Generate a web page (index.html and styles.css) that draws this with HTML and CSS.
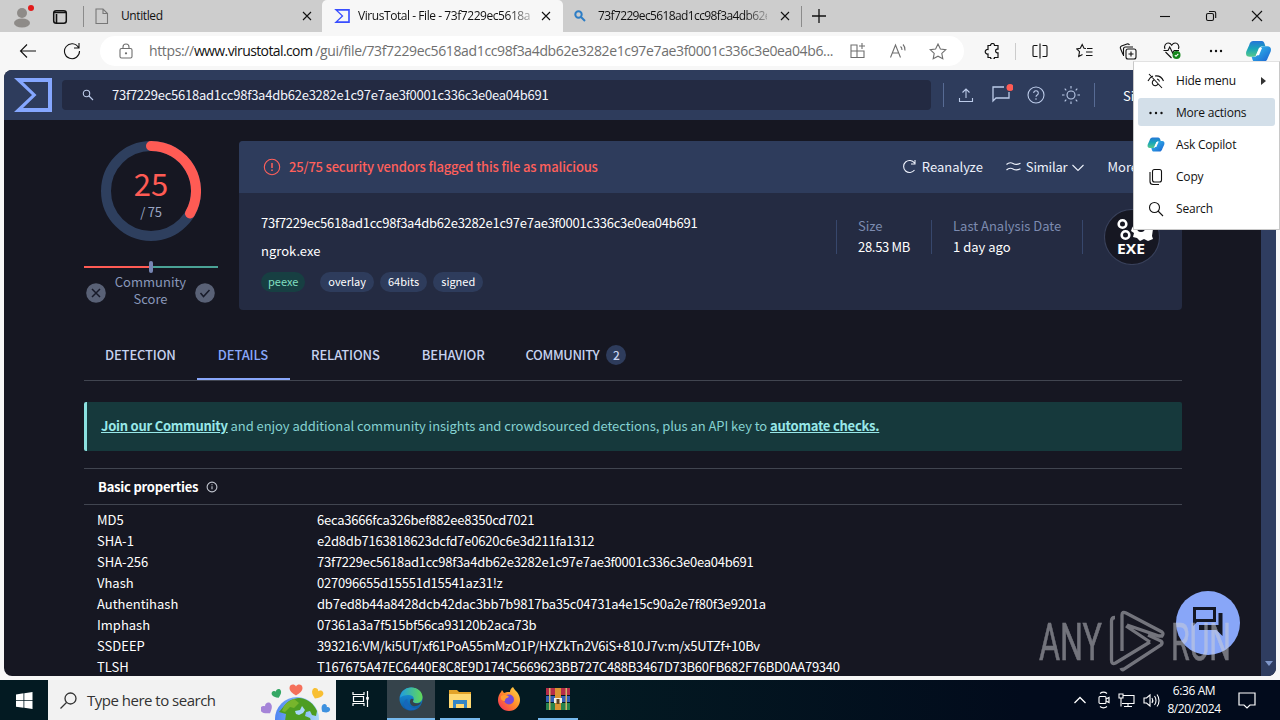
FILE: index.html
```html
<!DOCTYPE html>
<html lang="en">
<head>
<meta charset="utf-8">
<title>VirusTotal - File</title>
<link rel="stylesheet" href="styles.css">
</head>
<body>
<svg class="defs" aria-hidden="true">
  <defs>
    <linearGradient id="cpA" x1="0" y1="0" x2="0" y2="1"><stop offset="0" stop-color="#2476d8"/><stop offset=".5" stop-color="#18a5b8"/><stop offset="1" stop-color="#57c98a"/></linearGradient>
    <linearGradient id="cpB" x1="0" y1="0" x2="1" y2="1"><stop offset="0" stop-color="#32c5ee"/><stop offset="1" stop-color="#1b5fd0"/></linearGradient>
    <linearGradient id="edgeA" x1="0" y1="0" x2="1" y2="0"><stop offset="0" stop-color="#1f9de0"/><stop offset="1" stop-color="#62d957"/></linearGradient>
    <linearGradient id="edgeB" x1="0" y1="0" x2="0" y2="1"><stop offset="0" stop-color="#1b9de2"/><stop offset="1" stop-color="#0c59a4"/></linearGradient>
    <linearGradient id="fox" x1="1" y1="0" x2="0" y2="1"><stop offset="0" stop-color="#ffe14a"/><stop offset=".5" stop-color="#ff8a2a"/><stop offset="1" stop-color="#f5245f"/></linearGradient>
    <linearGradient id="earth" x1="0" y1="0" x2="1" y2="0"><stop offset="0" stop-color="#4f86f3"/><stop offset="1" stop-color="#a9d8fb"/></linearGradient>
    <symbol id="copilot" viewBox="0 0 24 24">
      <g stroke="none">
      <path d="M7 2h8c2 0 2.500 1.500 3 3l.6 2h-2.600c-2 0-3 1-3.600 3l-1.800 4c-.7 2-1.500 3-3.500 3H3.500c-3 0-4-2-3.200-5L3 6c.8-2.600 2-4 4-4z" fill="url(#cpA)"/>
      <path d="M17 22H9c-2 0-2.500-1.500-3-3l-.6-2H8c2 0 3-1 3.600-3L13.400 10c.7-2 1.500-3 3.500-3h3.600c3 0 4 2 3.200 5L21 18c-.8 2.600-2 4-4 4z" fill="url(#cpB)"/>
      <path d="M12.500 8.500h3l-3 7h-3z" fill="#fff"/>
      </g>
    </symbol>
    <symbol id="close" viewBox="0 0 12 12"><path d="M2 2l8 8M10 2l-8 8"/></symbol>
    <symbol id="sigma" viewBox="0 0 38 34"><path d="M0 0h38v34H0l18-17zM9 4l13.500 13L9 30h25V4z" fill="currentColor" fill-rule="evenodd" stroke="none"/></symbol>
    <path id="heart" d="M0 5.500C-4 3-6.500 1-6.500-2c0-4 5-4.500 6.500-1.500C1.500-6.500 6.500-6 6.500-2 6.500 1 4 3 0 5.500z" stroke="none"/>
  </defs>
</svg>

<div class="titlebar">
  <div class="avatar"><svg width="24" height="24" viewBox="0 0 24 24"><g fill="#8e8b88" stroke="none"><circle cx="12" cy="9" r="5"/><ellipse cx="12" cy="19" rx="8" ry="4.500"/></g><circle cx="21" cy="4" r="3" fill="#e21b1b" stroke="none"/></svg></div>
  <div class="workspaces"><svg width="16" height="16" viewBox="0 0 16 16"><rect x="1.700" y="1.700" width="12.600" height="12.600" rx="2.500" stroke-width="1.500"/><path d="M2 3.500h12M4.500 5v9" stroke-width="1.600"/></svg></div>
  <div class="tab tab-first">
    <svg class="gray" width="14" height="17" viewBox="0 0 14 17"><path d="M1 1h7l4.500 4.500V15.500H1zM8 1v4.500h4.500"/></svg>
    <span class="tab-label">Untitled</span>
    <svg width="12" height="12"><use href="#close"/></svg>
  </div>
  <div class="tab tab-active">
    <svg class="vt-blue" width="16" height="14"><use href="#sigma"/></svg>
    <span class="tab-label fade">VirusTotal - File - 73f7229ec5618a</span>
    <svg width="12" height="12"><use href="#close"/></svg>
  </div>
  <div class="tab tab-last">
    <svg width="12" height="12" viewBox="0 0 12 12"><g stroke="#2d7dc5" stroke-width="2"><circle cx="4.500" cy="4.500" r="3.200"/><path d="M7 7l4 4"/></g></svg>
    <span class="tab-label fade">73f7229ec5618ad1cc98f3a4db62e</span>
    <svg width="12" height="12"><use href="#close"/></svg>
  </div>
  <svg class="plus" width="14" height="14" viewBox="0 0 14 14"><path d="M7 0v14M0 7h14" stroke-width="1.300"/></svg>
  <div class="winbtns">
    <span><svg width="12" height="12" viewBox="0 0 12 12"><path d="M1 6.500h10"/></svg></span>
    <span><svg width="12" height="12" viewBox="0 0 12 12"><rect x="1.500" y="3.500" width="7" height="7" rx="1.500"/><path d="M4 1.500h5a1.700 1.700 0 0 1 1.700 1.700V8"/></svg></span>
    <span><svg width="12" height="12" viewBox="0 0 12 12"><path d="M1 1l10 10M11 1L1 11"/></svg></span>
  </div>
</div>

<div class="toolbar">
  <span class="tool"><svg width="18" height="16" viewBox="0 0 18 16"><path d="M17 8H1.500M8 1.500L1.500 8 8 14.500"/></svg></span>
  <span class="tool"><svg width="18" height="18" viewBox="0 0 18 18"><path d="M15.500 5.500A7.500 7.500 0 1 0 16.500 9M16 1v5h-5"/></svg></span>
  <div class="address">
    <svg class="lock" width="14" height="16" viewBox="0 0 14 16"><rect x="1" y="5.500" width="12" height="9.500" rx="1.500"/><path d="M4 5.500V4a3 3 0 0 1 6 0v1.500"/><circle cx="7" cy="10.300" r=".6"/></svg>
    <span class="url">https://<b>www.virustotal.com</b>/gui/file/73f7229ec5618ad1cc98f3a4db62e3282e1c97e7ae3f0001c336c3e0ea04b6...</span>
    <span class="addr-ic"><svg width="16" height="16" viewBox="0 0 16 16"><path d="M1 2h6v12.500H1zM1 8h13v6.500H7M12 0v6M9 3h6"/></svg></span>
    <span class="addr-ic"><svg width="18" height="16" viewBox="0 0 18 16"><path d="M1.500 14.500L6.500 2l5 12.500M3.300 10h6.400M11.500 3.500c1 .7 1.500 2 1.500 3.500M14 1.500c1.500 1.500 2.200 3.300 2 6"/></svg></span>
    <span class="addr-ic"><svg width="18" height="17" viewBox="0 0 18 17"><path d="M9 1l2.400 5 5.400.7-4 3.700 1 5.400L9 13.200l-4.800 2.600 1-5.400-4-3.700 5.400-.7z"/></svg></span>
  </div>
  <span class="tool ext"><svg width="16" height="16" viewBox="0 0 16 16"><path d="M4 2.500h2.500a2 2 0 0 1 4 0H14v3.700h-1a1.900 1.900 0 0 0 0 3.700h1v4.600h-3.500a2 2 0 0 1-4 0H4V11a2.300 2.300 0 1 1 0-4.500z" stroke-width="1.200"/></svg></span>
  <span class="tool"><svg width="16" height="16" viewBox="0 0 16 16"><path d="M5.500 2.500H2a1 1 0 0 0-1 1v9a1 1 0 0 0 1 1h3.500M10.500 2.500H14a1 1 0 0 1 1 1v9a1 1 0 0 1-1 1h-3.500M8 .5v15"/></svg></span>
  <span class="tool"><svg width="17" height="16" viewBox="0 0 17 16"><path d="M10 5.500L8 5.200 6.200 1.500 4.300 5.300.8 6l2.700 2.700-.8 4.800 3.800-2M11 5.500h5.500M10 9h6.500M10 12.500h6.500"/></svg></span>
  <span class="tool"><svg width="18" height="17" viewBox="0 0 18 17"><path d="M4 11.500L1.500 5.500a2 2 0 0 1 1-2.500L8 1a2 2 0 0 1 2.500 1M4.500 13V6a2 2 0 0 1 2-2H14"/><rect x="7" y="6" width="10" height="10" rx="2"/><path d="M12 8.500v5M9.500 11h5"/></svg></span>
  <span class="tool"><svg width="18" height="18" viewBox="0 0 18 18"><path d="M2 7C.5 3.500 3 1 5.200 1 7 1 8 2 8.700 3.200 9.500 2 10.500 1 12.200 1c2.300 0 4.600 2.500 3.200 6M.5 8.500H5l1.700-3.500 3 6 1.500-2.500H16M2.500 10l6 6"/><circle cx="13.500" cy="13" r="4" fill="#14861b" stroke="none"/><path d="M11.800 13l1.200 1.300 2.300-2.400" stroke="#fff"/></svg></span>
  <span class="tool"><svg width="14" height="4" viewBox="0 0 14 4"><g fill="#111" stroke="none"><circle cx="2" cy="2" r="1.200"/><circle cx="7" cy="2" r="1.200"/><circle cx="12" cy="2" r="1.200"/></g></svg></span>
  <span class="tool cp"><svg width="25" height="25"><use href="#copilot"/></svg></span>
</div>

<div class="page">
  <div class="page-main">
    <header class="vt-header">
      <svg class="vt-logo" width="38" height="34"><use href="#sigma"/></svg>
      <div class="vt-search"><svg width="12" height="12" viewBox="0 0 12 12"><circle cx="4.500" cy="4.500" r="3.200"/><path d="M7 7l4 4"/></svg><span>73f7229ec5618ad1cc98f3a4db62e3282e1c97e7ae3f0001c336c3e0ea04b691</span></div>
      <div class="vt-icons">
        <span><svg width="16" height="16" viewBox="0 0 16 16"><path d="M8 11V2M4.500 5.500L8 2l3.500 3.500M1.500 11v3.500h13V11"/></svg></span>
        <span class="chat"><svg width="22" height="20" viewBox="0 0 22 20"><path d="M13 4H2v14l3-3h13V9" stroke-width="1.300"/><circle cx="19" cy="4.500" r="3.500" fill="#ff5b54" stroke="none"/></svg></span>
        <span><svg width="18" height="18" viewBox="0 0 18 18"><circle cx="9" cy="9" r="8"/><path d="M6.700 7a2.300 2.300 0 1 1 3.500 2c-.8.5-1.200.8-1.200 1.800M9 12.300v1.400"/></svg></span>
        <span><svg width="20" height="20" viewBox="0 0 20 20"><circle cx="10" cy="10" r="4"/><path d="M10 1v2.500M10 16.500V19M1 10h2.500M16.500 10H19M3.700 3.700l1.600 1.600M14.700 14.700l1.600 1.600M3.700 16.300l1.600-1.600M14.700 5.300l1.600-1.600"/></svg></span>
      </div>
      <span class="signin">Sign in</span>
    </header>

    <main class="content">
      <section class="summary">
        <div class="score">
          <div class="gauge">
            <svg width="100" height="100" viewBox="0 0 100 100"><circle cx="50" cy="50" r="45" stroke="#2e3f5e" stroke-width="10"/><path d="M50 5a45 45 0 0 1 39 67.500" stroke="#ff5b54" stroke-width="10" stroke-linecap="round"/></svg>
            <div class="gauge-text"><strong>25</strong><span>/ 75</span></div>
          </div>
          <div class="slider"><i></i></div>
          <div class="community">
            <svg width="20" height="20" viewBox="0 0 20 20"><circle cx="10" cy="10" r="9.800" fill="#596176" stroke="none"/><path d="M6 6l8 8M14 6l-8 8" stroke="#171a29" stroke-width="1.500"/></svg>
            <span>Community<br>Score</span>
            <svg width="20" height="20" viewBox="0 0 20 20"><circle cx="10" cy="10" r="9.800" fill="#596176" stroke="none"/><path d="M5.500 10l3 3.500 6-6.500" stroke="#171a29" stroke-width="1.500"/></svg>
          </div>
        </div>
        <div class="card">
          <div class="card-head">
            <svg class="red" width="18" height="18" viewBox="0 0 18 18"><circle cx="9" cy="9" r="7.700"/><path d="M9 5v5M9 11.500v1.500" stroke-width="1.500"/></svg>
            <b>25/75 security vendors flagged this file as malicious</b>
            <span class="action reanalyze"><svg width="15" height="15" viewBox="0 0 15 15"><path d="M12.500 4A6 6 0 1 0 12.500 11M13 1v4H9"/></svg>Reanalyze</span>
            <span class="action similar"><svg width="15" height="11" viewBox="0 0 15 11"><path d="M.5 3.500c3-3 5-2 7-.8s4 1 7-.5M.5 9c3-3 5-2 7-.8s4 1 7-.5"/></svg>Similar<svg class="chev" width="12" height="8" viewBox="0 0 12 8"><path d="M.5 1L6 6.500 11.500 1"/></svg></span>
            <span class="action">More</span>
          </div>
          <div class="card-body">
            <div class="ident">
              <span class="hash">73f7229ec5618ad1cc98f3a4db62e3282e1c97e7ae3f0001c336c3e0ea04b691</span>
              <span>ngrok.exe</span>
              <div class="tags"><i class="green">peexe</i><i>overlay</i><i>64bits</i><i>signed</i></div>
            </div>
            <div class="stat size"><span>Size</span><em>28.53 MB</em></div>
            <div class="stat date"><span>Last Analysis Date</span><em>1 day ago</em></div>
            <div class="exe"><svg width="56" height="56" viewBox="0 0 56 56"><circle cx="28" cy="28" r="27.500" fill="#161722" stroke="#38405a"/><g stroke="#fff" stroke-width="2.600"><circle cx="18.500" cy="15" r="3.800"/><circle cx="21.500" cy="26" r="3.800"/></g><path d="M28 19l5-8 9 0 7 9-1 7 1 3-5 2-4-2-4 2-3-3-4-1 1-4-3-2z" fill="#fff" stroke="none"/><circle cx="37" cy="19" r="4" fill="#161722" stroke="none"/><text x="13" y="44.500" textLength="28" lengthAdjust="spacingAndGlyphs">EXE</text></svg></div>
          </div>
        </div>
      </section>

      <nav class="tabs">
        <span>DETECTION</span><span class="on">DETAILS</span><span>RELATIONS</span><span>BEHAVIOR</span><span class="comm">COMMUNITY <i>2</i></span>
      </nav>

      <div class="banner"><p><b>Join our Community</b> and enjoy additional community insights and crowdsourced detections, plus an API key to <b>automate checks.</b></p></div>

      <section class="props">
        <h2>Basic properties <svg width="12" height="12" viewBox="0 0 12 12"><circle cx="6" cy="6" r="4.900"/><path d="M6 5.300v3M6 3.300v1"/></svg></h2>
        <dl>
          <dt>MD5</dt><dd>6eca3666fca326bef882ee8350cd7021</dd>
          <dt>SHA-1</dt><dd>e2d8db7163818623dcfd7e0620c6e3d211fa1312</dd>
          <dt>SHA-256</dt><dd class="tight">73f7229ec5618ad1cc98f3a4db62e3282e1c97e7ae3f0001c336c3e0ea04b691</dd>
          <dt>Vhash</dt><dd>027096655d15551d15541az31!z</dd>
          <dt>Authentihash</dt><dd>db7ed8b44a8428dcb42dac3bb7b9817ba35c04731a4e15c90a2e7f80f3e9201a</dd>
          <dt>Imphash</dt><dd>07361a3a7f515bf56ca93120b2aca73b</dd>
          <dt>SSDEEP</dt><dd class="tight">393216:VM/ki5UT/xf61PoA55mMzO1P/HXZkTn2V6iS+810J7v:m/x5UTZf+10Bv</dd>
          <dt>TLSH</dt><dd class="tight">T167675A47EC6440E8C8E9D174C5669623BB727C488B3467D73B60FB682F76BD0AA79340</dd>
        </dl>
      </section>
    </main>
  </div>
  <div class="scrollbar"><svg width="8" height="5" viewBox="0 0 8 5"><path d="M0 0h8L4 5z" fill="#7f97ca" stroke="none"/></svg></div>
</div>

<div class="taskbar">
  <span class="start"><svg width="17" height="17" viewBox="0 0 17 17"><path d="M0 2.500l7.500-1.200v6.900H0zM8.300 1.200L16.500 0v8.200H8.300zM0 9h7.500v6.800L0 14.700zM8.300 9h8.200v8l-8.200-1.200z" fill="#fff" stroke="none"/></svg></span>
  <div class="tsearch">
    <svg width="17" height="17" viewBox="0 0 17 17"><circle cx="10.500" cy="6.500" r="5.500" stroke-width="1.300"/><path d="M6.500 10.500l-6 6" stroke-width="1.300"/></svg>
    <span>Type here to search</span>
    <svg class="globe" width="74" height="38" viewBox="0 0 74 38">
      <circle cx="36" cy="37" r="22" fill="url(#earth)" stroke="none"/>
      <path d="M23 24c4-6 11-8 16-8 8 1 14 6 17 13l-1 5-4-1-2-4-4 1-1 4 5 2 1 3H24l1-7-7-2z" fill="#4d9d22" stroke="none"/>
      <path d="M23 24c3-4 7-6 10-7l5 4-5 5-4-1-5 5-3-1z" fill="#77b52c" stroke="none"/><path d="M34 29l5-1 2-4 3 4-2 3-4 2-3-1z" fill="#a9d8fb" stroke="none"/>
      <use href="#heart" transform="translate(35 8)" fill="#f5705b"/>
      <use href="#heart" transform="translate(16 12) rotate(-25) scale(.75)" fill="#35a764"/>
      <use href="#heart" transform="translate(56 12) rotate(25) scale(.9)" fill="#f8bf32"/>
      <use href="#heart" transform="translate(6 27) rotate(-35) scale(.95)" fill="#a584d8"/>
      <use href="#heart" transform="translate(64 27) rotate(45) scale(.72)" fill="#3d91df"/>
    </svg>
  </div>
  <span class="app view"><svg width="18" height="16" viewBox="0 0 18 16"><path d="M1 1v2.500h11V1M1 15v-2.500h11V15M1.500 5.500h10v5h-10zM15.500 0v16" stroke-width="1.200"/><path d="M14.200 6h2.600v2.600h-2.600z" fill="#fff" stroke="none"/></svg></span>
  <span class="app active"><svg width="24" height="24" viewBox="0 0 24 24"><g stroke="none"><circle cx="12" cy="12" r="11.500" fill="url(#edgeB)"/><path d="M1 11C2 4 7 .5 12.500.5 19 .5 23.500 5 23.500 10c0 4-3 6-6 6-2 0-4-.6-3.500-2 2-2 .5-6-4-6C6 8 2 9 1 11z" fill="url(#edgeA)"/><path d="M8.500 12c-1 6 4 10 10 9-3 2.500-8 3-11 1C3.500 19 4 13 8.500 12z" fill="#1667ba"/><path d="M14 14c-.5 1.400 1.500 2.500 4 2.500 2 0 3.500-.6 4.500-1.700-1 3-5 5.200-8.500 4.200-3-1-4-5-2-7 2-.5 3 .5 2 2z" fill="#35434b"/></g></svg></span>
  <span class="app run"><svg width="22" height="20" viewBox="0 0 22 20"><g stroke="none"><path d="M0 1h8l2 2h12v4H0z" fill="#e3a329"/><path d="M0 5h22v14H0z" fill="#ffd972"/><path d="M4 11h14v8h-3v-4H7v4H4z" fill="#3486c5"/></g></svg></span>
  <span class="app"><svg width="24" height="24" viewBox="0 0 24 24"><g stroke="none"><path d="M4 5l1-2 2 3 3-1 3 0c0-2 1-4 3-5 1 2 2 3 4 5 2 3 3 5 3 8a11 11 0 0 1-22 0c0-3 1-6 3-8z" fill="url(#fox)"/><circle cx="12" cy="12.500" r="5" fill="#7649d8"/><path d="M4 9c3-2 7-1 8 1-2 1-4 1-4 4-3 0-5-2-4-5z" fill="#ff9c30"/></g></svg></span>
  <span class="app run"><svg width="24" height="22" viewBox="0 0 24 22"><g stroke="none"><path d="M0 0h24v7H0z" fill="#b62c48"/><path d="M0 8h24v6H0z" fill="#335fb6"/><path d="M0 15h24v7H0z" fill="#28834c"/><path d="M3 0h1.500v22H3zM19.500 0H21v22h-1.500z" fill="#d2b46a"/><path d="M9 0h6v22H9z" fill="#d99432"/><path d="M8 10h8v5H8z" fill="#f3eee3"/><path d="M10.500 11h3v5h-3z" fill="#5c4222"/></g></svg></span>
  <div class="tray">
    <svg width="12" height="8" viewBox="0 0 12 8"><path d="M.5 7L6 1.500 11.500 7" stroke-width="1.300"/></svg>
    <svg width="12" height="18" viewBox="0 0 12 18"><rect x="1" y="5.500" width="7" height="7" rx="1"/><path d="M8 8l3-1.500v5L8 10M2 2.500c2-1.500 5-1.500 7 0M2 15.500c2 1.500 5 1.500 7 0" stroke-width="1.200"/></svg>
    <svg width="17" height="15" viewBox="0 0 17 15"><path d="M5 2.500h11v8H4M10 10.500v3M6 13.500h8M1 1h4v4H1zM3 5v8.500"/></svg>
    <svg width="17" height="15" viewBox="0 0 17 15"><path d="M1 5h2.500L7 2v11L3.500 10H1zM9 5c1 1.500 1 3.500 0 5M11.500 3c2 2.500 2 6.500 0 9M14 1.500c2.700 3.500 2.700 8.500 0 12"/></svg>
    <div class="clock">6:36 AM<br>8/20/2024</div>
    <svg width="18" height="17" viewBox="0 0 18 17"><path d="M1 1h16v12h-5l-3 3-3-3H1z" stroke-width="1.200"/></svg>
  </div>
</div>

<div class="fab"><svg width="30" height="32" viewBox="0 0 30 32"><rect x="1.500" y="4.500" width="20" height="12" stroke="#141724" stroke-width="3"/><path d="M0 17h5l-5 5zM25.500 9h4v23l-6-6H6v-5h19.500z" fill="#141724" stroke="none"/></svg></div>

<svg class="watermark" width="194" height="66" viewBox="0 0 194 66">
  <text x="0" y="51.500" textLength="63" lengthAdjust="spacingAndGlyphs">ANY</text>
  <text x="132" y="51.500" textLength="60" lengthAdjust="spacingAndGlyphs">RUN</text>
  <path d="M76 9.500q-3.500 0-3.500 3.500V52q0 5 4 3L111 34M83 43V7q0-4 4-2l36 19q2 1.500 0 4h-3L88 17M111 34L87 18M109 27l13 6q2 2 0 4L85 61q-2 2-3-1" stroke-width="3.300"/>
</svg>

<div class="menu">
  <div><svg width="18" height="16" viewBox="0 0 18 16"><path d="M2 1l13 14M1 8c1.500-3 3-4.200 5-5M8 3c4-.5 7 1.500 8.500 5M7 7a3 3 0 1 0 4 4M10 6c1.500.3 2.300 1.300 2.500 2.500"/></svg><span>Hide menu</span><svg class="arrow" width="5" height="8" viewBox="0 0 5 8"><path d="M0 0v8l5-4z" fill="#333" stroke="none"/></svg></div>
  <div class="hover"><svg width="18" height="4" viewBox="0 0 18 4"><g fill="#111" stroke="none"><circle cx="3.500" cy="2" r="1.200"/><circle cx="9" cy="2" r="1.200"/><circle cx="14.500" cy="2" r="1.200"/></g></svg><span>More actions</span></div>
  <div><svg width="18" height="17"><use href="#copilot" width="18" height="17"/></svg><span>Ask Copilot</span></div>
  <div><svg width="18" height="18" viewBox="0 0 18 18"><rect x="5.500" y="1.500" width="9" height="12.500" rx="2"/><path d="M3 4v9.500a3 3 0 0 0 3 3h6"/></svg><span>Copy</span></div>
  <div><svg width="18" height="16" viewBox="0 0 18 16"><circle cx="7.500" cy="6.500" r="5"/><path d="M11 10l5 5"/></svg><span>Search</span></div>
</div>
</body>
</html>
```

FILE: styles.css
```css
* { box-sizing: border-box; }
body { margin: 0; width: 1280px; height: 720px; overflow: hidden; display: flex; flex-direction: column; background: #f7f7f7; font-family: "Open Sans", "Noto Sans", sans-serif; font-size: 12px; color: #111; position: relative; }
svg { fill: none; stroke: currentColor; stroke-width: 1.1; flex: none; display: block; }
.defs { position: absolute; width: 0; height: 0; }
i, em { font-style: normal; }

.titlebar { height: 32px; flex: none; background: #cdcdcd; display: flex; align-items: center; }
.avatar { width: 44px; padding-left: 10px; }
.workspaces { width: 40px; height: 21px; padding: 3px 0 0 8px; border-right: 1px solid #8b8b8b; }
.tab { display: flex; align-items: center; height: 32px; white-space: nowrap; }
.tab-label { flex: 1; overflow: hidden; font-size: 12px; line-height: 18px; }
.tab-first { width: 238px; padding: 0 9px 0 11px; gap: 12px; }
.tab-active { width: 241px; padding: 0 11px 0 12px; gap: 8px; background: #f7f7f7; border-radius: 5px 5px 0 0; }
.tab-last { width: 239px; height: 21px; padding: 0 10px 0 11px; gap: 12px; border-right: 1px solid #8b8b8b; }
.fade { -webkit-mask-image: linear-gradient(90deg, #000 86%, rgba(0,0,0,.25)); mask-image: linear-gradient(90deg, #000 86%, rgba(0,0,0,.25)); }
.tab-first .tab-label { letter-spacing: -.4px; }
.tab-active .tab-label { letter-spacing: -.44px; }
.tab-last .tab-label { letter-spacing: -.62px; }
.gray { color: #777; }
.vt-blue { color: #394eff; }
.plus { margin-left: 10px; }
.winbtns { margin-left: auto; display: flex; }
.winbtns span { width: 46px; display: flex; justify-content: center; }

.toolbar { height: 38px; flex: none; display: flex; align-items: center; padding-left: 6px; }
.tool { width: 44px; display: flex; justify-content: center; flex: none; }
.cp { width: 40px; }
.ext { width: 47px; margin-left: 5px; height: 17px; margin-right: 2px; border-right: 1px solid #ccc; }
.address { width: 864px; height: 30px; margin-left: 6px; border-radius: 15px; background: #fff; display: flex; align-items: center; padding-left: 19px; color: #6f6f6f; }
.url { width: 689px; margin-left: 16px; font-size: 14px; letter-spacing: -.36px; white-space: nowrap; line-height: 20px; }
.url b { font-weight: 400; color: #111; letter-spacing: -.6px; margin-right: 3px; }
.addr-ic { width: 40px; display: flex; justify-content: center; flex: none; }

.page { height: 606px; flex: none; margin: 0 4px; border-radius: 8px; overflow: hidden; display: flex; background: #161722; color: #fff; font-family: "Noto Sans CJK SC", "Noto Sans", sans-serif; font-size: 13px; }
.page-main { flex: 1; min-width: 0; }
.scrollbar { width: 15px; background: #2f3d60; display: flex; align-items: flex-end; justify-content: center; padding-bottom: 10px; }
.vt-header { height: 50px; background: #2e3c5c; display: flex; align-items: center; padding-left: 10px; color: #bccbe9; }
.vt-logo { color: #85a7ff; }
.vt-search { width: 869px; height: 30px; margin-left: 10px; border-radius: 4px; background: #232a42; display: flex; align-items: center; padding-left: 20px; gap: 18px; }
.vt-search span { color: #f2f4fb; letter-spacing: -.25px; padding-bottom: 1px; }
.vt-icons { margin-left: 12px; height: 24px; width: 152px; border: solid #576b94; border-width: 0 1px; display: flex; align-items: center; padding-left: 4px; }
.vt-icons span { width: 35px; display: flex; justify-content: center; }
.vt-icons .chat { padding: 0 0 4px 2px; }
.signin { margin-left: 28px; color: #fff; white-space: nowrap; }

.content { padding: 21px 79px 0 80px; }
.summary { display: flex; gap: 21px; height: 169px; }
.score { width: 134px; }
.gauge { width: 100px; height: 100px; margin-left: 17px; display: grid; }
.gauge > * { grid-area: 1 / 1; }
.gauge-text { text-align: center; padding-top: 21px; color: #9aa6c3; display: flex; flex-direction: column; }
.gauge strong { color: #ff5b54; font-size: 31px; font-weight: 400; line-height: 41px; }
.gauge-text span { line-height: 17px; letter-spacing: -.25px; }
.slider { height: 12px; margin-top: 20px; display: flex; align-items: center; justify-content: center; background: linear-gradient(90deg, #ff5b54 50%, #4aa296 50%) center / 100% 2px no-repeat; }
.slider i { width: 4px; height: 12px; border-radius: 2px; background: #7886b4; }
.community { display: flex; justify-content: space-between; align-items: flex-end; margin: 0 3px 0 2px; color: #8997ba; text-align: center; line-height: 17px; }
.community svg { margin-bottom: 4px; }
.card { flex: 1; border-radius: 4px; overflow: hidden; background: #242b42; }
.card-head { height: 52px; background: #2e3c5c; display: flex; align-items: center; padding: 0 44px 1px 24px; }
.card-head b { color: #ff605b; font-weight: 500; margin-left: 8px; letter-spacing: -.17px; }
.red { color: #ff605b; }
.action { display: flex; align-items: center; gap: 5px; margin-left: 23px; color: #edf1fb; }
.reanalyze { margin-left: auto; }
.similar { letter-spacing: -.2px; }
.chev { margin-top: 2px; }
.card-body { display: flex; height: 117px; padding: 19px 22px 0; }
.ident { width: 575px; line-height: 22px; display: flex; flex-direction: column; gap: 6px; }
.hash { letter-spacing: -.25px; }
.tags { display: flex; gap: 6px; height: 20px; margin-top: 4px; }
.tags i { height: 20px; padding: 0 8px; border-radius: 10px; font-size: 11px; line-height: 19px; background: #2e3c5c; }
.tags .green { background: #173f42; color: #80dfc0; padding: 0 7px; margin-right: 9px; }
.stat { height: 34px; margin-top: 8px; border-left: 1px solid #37476c; padding-left: 21px; display: flex; flex-direction: column; line-height: 21px; }
.stat span { color: #7d8bb0; margin-top: -5px; }
.size { width: 95px; }
.size em { letter-spacing: -.3px; }
.date { width: 152px; border-right: 1px solid #37476c; }
.exe { margin: -3px 0 0 21px; }
.exe text { font: 700 15px "Open Sans", sans-serif; fill: #fff; stroke: none; }

.tabs { display: flex; height: 50px; margin-top: 21px; border-bottom: 1px solid #414550; font-weight: 500; font-size: 13px; letter-spacing: -.15px; color: #c7d2ef; }
.tabs span { padding: 0 21px 2px; display: flex; align-items: center; height: 49px; }
.tabs .on { color: #89a7fa; border-bottom: 2px solid #89a7fa; padding-bottom: 0; padding-right: 22px; letter-spacing: -.12px; }
.tabs .comm { letter-spacing: -.4px; padding-left: 20px; }
.tabs i { width: 20px; height: 20px; border-radius: 50%; background: #2e3c5c; margin-left: 7px; text-align: center; line-height: 19px; font-size: 12px; }
.banner { height: 49px; margin-top: 21px; background: #16393c; border-left: 3px solid #8be0df; border-radius: 2px; padding: 14px; color: #85d2d2; }
.banner p { margin: 0; line-height: 20px; white-space: nowrap; letter-spacing: -.06px; }
.banner b { text-decoration: underline; color: #98e8e8; letter-spacing: -.24px; }
.props { margin-top: 17px; border-top: 1px solid #414550; }
.props h2 { margin: 0; height: 36px; border-bottom: 1px solid #414550; display: flex; align-items: center; gap: 8px; font-size: 13px; letter-spacing: -.22px; padding: 0 0 1px 14px; }
.props h2 svg { color: #c0c4ce; margin-top: 1px; }
.props dl { margin: 4px 0 0 13px; display: grid; grid-template-columns: 220px 1fr; line-height: 21px; }
.props dd { margin: 0; white-space: nowrap; letter-spacing: -.22px; }
.props .tight { letter-spacing: -.25px; }

.taskbar { height: 40px; flex: none; margin-top: 4px; background: linear-gradient(90deg, #031a22 0, #031a22 45%, #020b1c 80%); display: flex; color: #fff; }
.start { width: 48px; display: flex; align-items: center; justify-content: center; }
.tsearch { width: 288px; background: #f2f2f2; color: #333; font-size: 15px; display: flex; align-items: center; padding-left: 12px; }
.tsearch span { margin-left: 10px; width: 174px; white-space: nowrap; letter-spacing: -.5px; }
.globe { align-self: flex-end; }
.app { width: 49px; display: flex; align-items: center; justify-content: center; border-bottom: 2px solid transparent; }
.view { width: 51px; padding-right: 2px; }
.app.active { background: #35434b; border-color: #76b9ed; width: 48px; }
.app.run { background: linear-gradient(#76b9ed, #76b9ed) center bottom / 40px 2px no-repeat; background-origin: border-box; background-clip: border-box; }
.tray { margin-left: auto; display: flex; align-items: center; padding-right: 24px; gap: 8px; }
.tray > svg:first-child { margin-right: 4px; }
.clock { width: 68px; margin: 0 2px 0 -8px; text-align: center; line-height: 18px; font-size: 12px; letter-spacing: -.4px; }

.fab { position: absolute; left: 1176px; top: 591px; width: 64px; height: 64px; border-radius: 50%; background: #88a6f8; padding: 13px 0 0 17px; }
.watermark { position: absolute; left: 1039px; top: 608px; color: #d0d1d6; opacity: .5; }
.watermark text { font: 400 51px Roboto, sans-serif; fill: currentColor; stroke: currentColor; stroke-width: .6; }
.menu { position: absolute; left: 1133px; top: 61px; width: 147px; height: 169px; background: #fff; border: 1px solid #c8c8c8; border-top-color: #e2e2e2; padding: 4px; display: flex; flex-direction: column; gap: 4px; }
.menu div { height: 28px; border-radius: 3px; display: flex; align-items: center; padding: 1px 9px 0; gap: 11px; letter-spacing: -.2px; }
.menu .hover { background: #d3dfe9; }
.arrow { margin-left: auto; }
```
